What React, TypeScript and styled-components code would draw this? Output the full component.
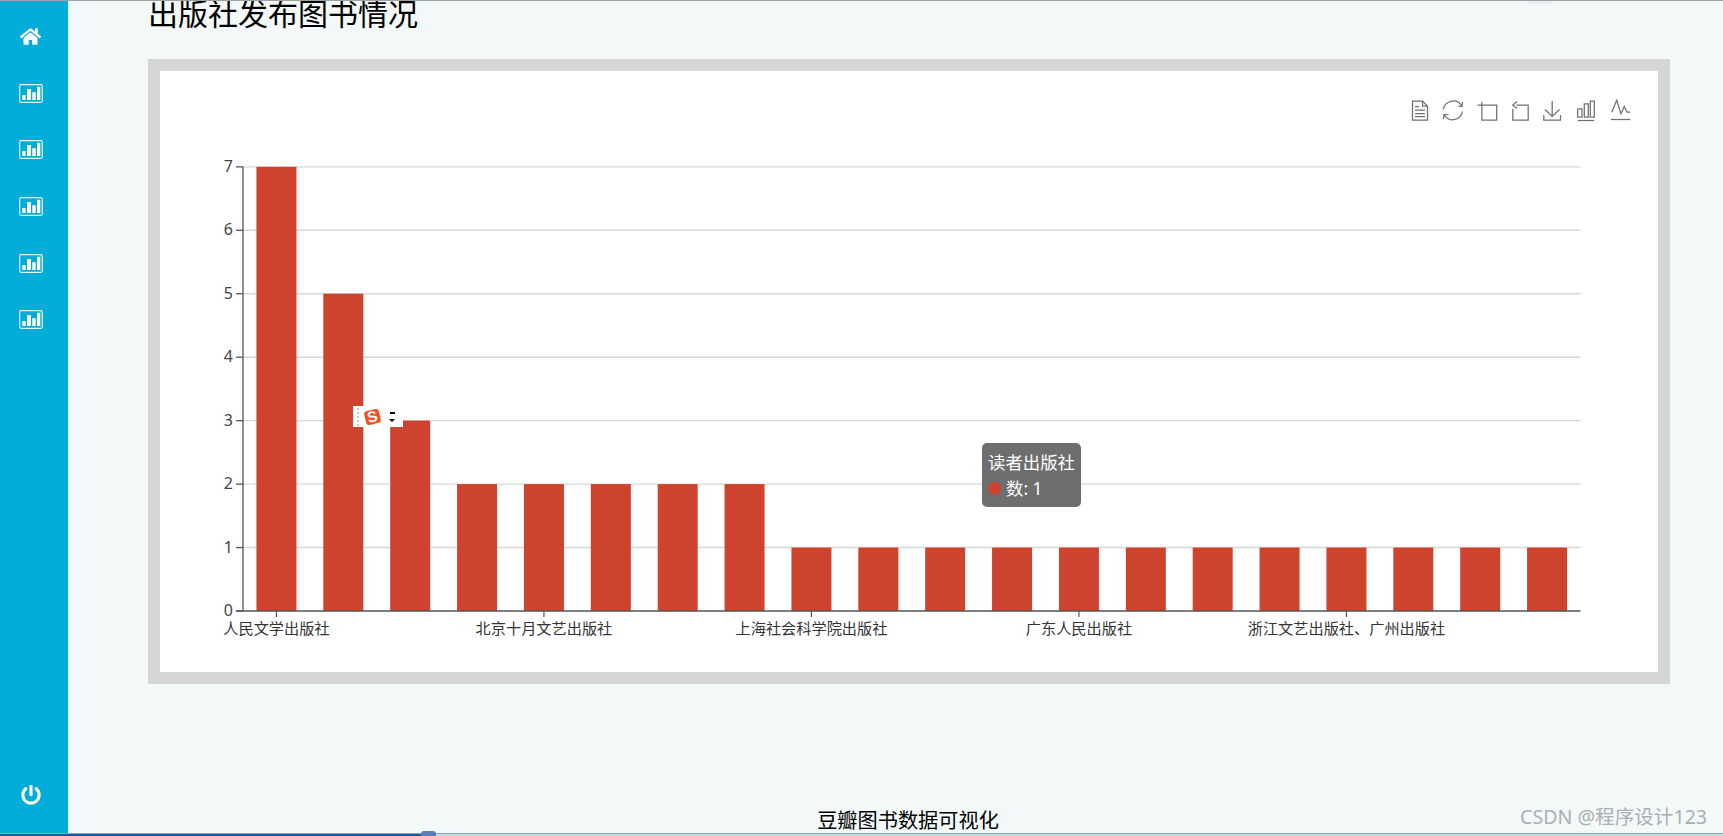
import React from "react";
import styled, { createGlobalStyle } from "styled-components";
import { FaHome, FaPowerOff } from "react-icons/fa";

const BAR_VALUES = [7, 5, 3, 2, 2, 2, 2, 2, 1, 1, 1, 1, 1, 1, 1, 1, 1, 1, 1, 1];
const X_LABELS: Record<number, string> = {
  0: "人民文学出版社",
  4: "北京十月文艺出版社",
  8: "上海社会科学院出版社",
  12: "广东人民出版社",
  16: "浙江文艺出版社、广州出版社",
};

// chart geometry, relative to the svg
const AXIS_X = 83;
const AXIS_END = 1420.5;
const BASE_Y = 461;
const UNIT = 63.45;
const BAND = (AXIS_END - AXIS_X) / 20;

const ChartIcon = () => (
  <svg width="24" height="19" viewBox="0 0 24 19" fill="none">
    <rect x="0.7" y="0.7" width="22.6" height="17.6" rx="1.5" stroke="#e4f7fc" strokeWidth="1.2" />
    <path d="M3.3 11h3.3v5H3.3zM8 5h4v11H8zM13.3 8.3h3.4V16h-3.4zM18 2.7h3.3V16H18z" fill="#fff" />
  </svg>
);

const toolIcons = [
  <>
    <path d="M2.5 2h10l5 5v14H2.5z" />
    <path d="M12.5 2v5h5M5 7.5h4M5 11h10M5 14.5h10M5 17.5h10" />
  </>,
  <>
    <path d="M0.3 10.5A10 10 0 0 1 18.5 6.5M19.5 3L19 7.5L15 7" />
    <path d="M19.5 12.5A10 10 0 0 1 1.5 16.5M0.5 20L1 15.5L5.5 16" />
  </>,
  <path d="M1.5 6H20.7V21H5.9V2.7" />,
  <path d="M7.5 6H19.2V21H3.8V10M8 2.5L3.8 6L8 9.5" />,
  <path d="M10.2 2V17.5M3 10.5L10.2 17.5L17.5 10.5M1.8 16V21H18.5V16" />,
  <>
    <path d="M2.7 9.8H7V18.2H2.7zM9.3 4.8H13.3V18.2H9.3zM15.3 2.2H19.3V18.2H15.3z" />
    <path d="M2.7 21.5H19.3" />
  </>,
  <>
    <path d="M3.7 13.2L8.7 1.3L13 14.8L16.3 7.5L19 13.2H22.3" />
    <path d="M3 20.5H22.3" />
  </>,
];

const App: React.FC = () => {
  return (
    <>
      <GlobalStyle />
      <Screen>
        <TopEdge />
        <TopBump />
        <Body>
          <Sidebar>
            <NavItem>
              <FaHome size={21} />
            </NavItem>
            {[0, 1, 2, 3, 4].map((i) => (
              <NavItem key={i}>
                <ChartIcon />
              </NavItem>
            ))}
            <PowerItem>
              <FaPowerOff size={20} />
            </PowerItem>
          </Sidebar>
          <Main>
            <Title>出版社发布图书情况</Title>
            <ChartCard>
              <Toolbox>
                {toolIcons.map((icon, i) => (
                  <ToolIcon key={i} viewBox="0 0 22 22">
                    {icon}
                  </ToolIcon>
                ))}
              </Toolbox>
              <ChartSvg viewBox="0 0 1498 522">
                {[1, 2, 3, 4, 5, 6, 7].map((v) => (
                  <line
                    key={v}
                    x1={AXIS_X}
                    x2={AXIS_END}
                    y1={BASE_Y - v * UNIT}
                    y2={BASE_Y - v * UNIT}
                    stroke="#d6d6d6"
                    strokeWidth="1.4"
                  />
                ))}
                {BAR_VALUES.map((v, i) => (
                  <rect
                    key={i}
                    x={AXIS_X + BAND * (i + 0.5) - 20}
                    y={BASE_Y - v * UNIT}
                    width="40"
                    height={v * UNIT}
                    fill="#ce432e"
                  />
                ))}
                <path
                  d={`M${AXIS_X} ${BASE_Y - 7 * UNIT}V${BASE_Y}M${AXIS_X - 7} ${BASE_Y}H${AXIS_END}`}
                  stroke="#555"
                  strokeWidth="1.3"
                  fill="none"
                />
                {[0, 1, 2, 3, 4, 5, 6, 7].map((v) => (
                  <g key={v}>
                    <line
                      x1={AXIS_X - 7}
                      x2={AXIS_X}
                      y1={BASE_Y - v * UNIT}
                      y2={BASE_Y - v * UNIT}
                      stroke="#555"
                      strokeWidth="1.3"
                    />
                    <YLabel x={AXIS_X - 10} y={BASE_Y - v * UNIT - 1} textAnchor="end" dominantBaseline="central">
                      {v}
                    </YLabel>
                  </g>
                ))}
                {Object.entries(X_LABELS).map(([i, label]) => {
                  const cx = AXIS_X + BAND * (Number(i) + 0.5);
                  return (
                    <g key={i}>
                      <line x1={cx} x2={cx} y1={BASE_Y} y2={BASE_Y + 6} stroke="#555" strokeWidth="1.2" />
                      <XLabel x={cx} y={BASE_Y + 16} textAnchor="middle" dominantBaseline="central">
                        {label}
                      </XLabel>
                    </g>
                  );
                })}
              </ChartSvg>
              <Tooltip>
                <TooltipTitle>读者出版社</TooltipTitle>
                <TooltipRow>
                  <TooltipDot />
                  数: 1
                </TooltipRow>
              </Tooltip>
              <ImeBar>
                <ImeHandle />
                <ImeLogo>
                  <span>S</span>
                </ImeLogo>
                <ImeArrows>
                  <i />
                  <b />
                </ImeArrows>
              </ImeBar>
            </ChartCard>
            <Footer>豆瓣图书数据可视化</Footer>
          </Main>
        </Body>
        <TaskbarEdge>
          <TaskbarStart />
          <TaskbarThumb />
        </TaskbarEdge>
        <Watermark>CSDN @程序设计123</Watermark>
      </Screen>
    </>
  );
};

export default App;

// Styled Components
const GlobalStyle = createGlobalStyle`
  html, body {
    margin: 0;
    padding: 0;
    overflow: hidden;
  }
  body {
    font-family: "Noto Sans CJK SC", "Noto Sans", sans-serif;
  }
`;

const Screen = styled.div`
  position: relative;
  display: flex;
  flex-direction: column;
  width: 1723px;
  height: 836px;
  overflow: hidden;
  background: #f3f8f9;
`;

const TopEdge = styled.div`
  flex: none;
  height: 1px;
  background: #9aa3a6;
`;

const TopBump = styled.div`
  position: absolute;
  top: 1px;
  left: 1527px;
  width: 26px;
  height: 3px;
  border-radius: 0 0 13px 13px;
  background: #eaeff1;
`;

const Body = styled.div`
  flex: 1;
  display: flex;
  min-height: 0;
`;

const Sidebar = styled.nav`
  flex: none;
  display: grid;
  grid-template-rows: repeat(6, 56.6px) 1fr;
  width: 68px;
  padding: 7.5px 7px 0 0;
  box-sizing: border-box;
  background: #00acd8;
  color: #fff;
`;

const NavItem = styled.div`
  display: flex;
  align-items: center;
  justify-content: center;
`;

const PowerItem = styled(NavItem)`
  align-self: end;
  height: 76px;
`;

const Main = styled.main`
  flex: 1;
  display: flex;
  flex-direction: column;
  min-width: 0;
  padding-left: 80px;
  overflow: hidden;
`;

const Title = styled.h1`
  flex: none;
  width: 1522px;
  height: 38px;
  margin: -8px 0 0;
  padding-bottom: 28px;
  font-size: 30px;
  line-height: 38px;
  font-weight: 400;
  color: #000;
  box-sizing: content-box;
`;

const ChartCard = styled.section`
  position: relative;
  flex: none;
  display: flex;
  flex-direction: column;
  width: 1522px;
  height: 625px;
  box-sizing: border-box;
  border: 12px solid #d6d6d6;
  background: #fff;
`;

const Toolbox = styled.div`
  flex: none;
  display: flex;
  justify-content: flex-end;
  gap: 11px;
  height: 79px;
  box-sizing: border-box;
  padding: 28px 28px 0 0;
`;

const ToolIcon = styled.svg`
  width: 22px;
  height: 22px;
  fill: none;
  stroke: #707070;
  stroke-width: 1.25;
  overflow: visible;
`;

const ChartSvg = styled.svg`
  display: block;
  flex: none;
  width: 1498px;
  height: 522px;
`;

const YLabel = styled.text`
  font-family: "Noto Sans", sans-serif;
  font-size: 16px;
  fill: #444;
`;

const XLabel = styled.text`
  font-family: "Noto Sans CJK SC", sans-serif;
  font-size: 15.2px;
  fill: #333;
`;

const Tooltip = styled.div`
  position: absolute;
  left: 822px;
  top: 372px;
  width: 99px;
  height: 64px;
  box-sizing: border-box;
  padding: 6px;
  border-radius: 5px;
  background: #6e6e6e;
  color: #fff;
  font-size: 17.4px;
  line-height: 26px;
  white-space: nowrap;
`;

const TooltipTitle = styled.div``;

const TooltipRow = styled.div`
  display: flex;
  align-items: center;
  font-family: "Noto Sans", "Noto Sans CJK SC", sans-serif;
`;

const TooltipDot = styled.span`
  width: 13px;
  height: 13px;
  margin-right: 5px;
  border-radius: 50%;
  background: #ce432e;
`;

const ImeBar = styled.div`
  position: absolute;
  left: 193px;
  top: 335px;
  display: flex;
  align-items: center;
  width: 50px;
  height: 21px;
  background: #fff;
`;

const ImeHandle = styled.div`
  width: 2px;
  height: 18px;
  margin-left: 4px;
  border-left: 2px dotted #c4c4c4;
`;

const ImeLogo = styled.div`
  display: flex;
  align-items: center;
  justify-content: center;
  width: 15px;
  height: 14px;
  margin-left: 4px;
  border-radius: 3px;
  background: #f4511e;
  transform: rotate(-14deg);

  span {
    color: #fff;
    font-family: "Liberation Sans", sans-serif;
    font-size: 15px;
    font-weight: 700;
    line-height: 14px;
  }
`;

const ImeArrows = styled.div`
  display: flex;
  flex-direction: column;
  align-items: center;
  gap: 5px;
  margin-left: 9px;

  i {
    display: block;
    width: 5px;
    height: 2px;
    background: #000;
  }
  b {
    display: block;
    border-left: 3px solid transparent;
    border-right: 3px solid transparent;
    border-top: 3px solid #000;
  }
`;

const Footer = styled.footer`
  margin-top: auto;
  width: 1520px;
  height: 26px;
  font-size: 20.2px;
  line-height: 26px;
  text-align: center;
  color: #000;
`;

const TaskbarEdge = styled.div`
  position: relative;
  flex: none;
  display: flex;
  height: 3px;
  box-sizing: border-box;
  border-top: 1px solid #8fa3b0;
  background: #bfe0db;
`;

const TaskbarStart = styled.div`
  width: 421px;
  background: #0d5cab;
`;

const TaskbarThumb = styled.div`
  position: absolute;
  left: 421px;
  top: -3px;
  width: 15px;
  height: 5px;
  border-radius: 3px 3px 0 0;
  background: #5a80bc;
`;

const Watermark = styled.div`
  position: absolute;
  left: 1520px;
  top: 804px;
  font-family: "Noto Sans", "Noto Sans CJK SC", sans-serif;
  font-size: 19.6px;
  line-height: 26px;
  color: #a9b0b2;
  white-space: nowrap;
`;
